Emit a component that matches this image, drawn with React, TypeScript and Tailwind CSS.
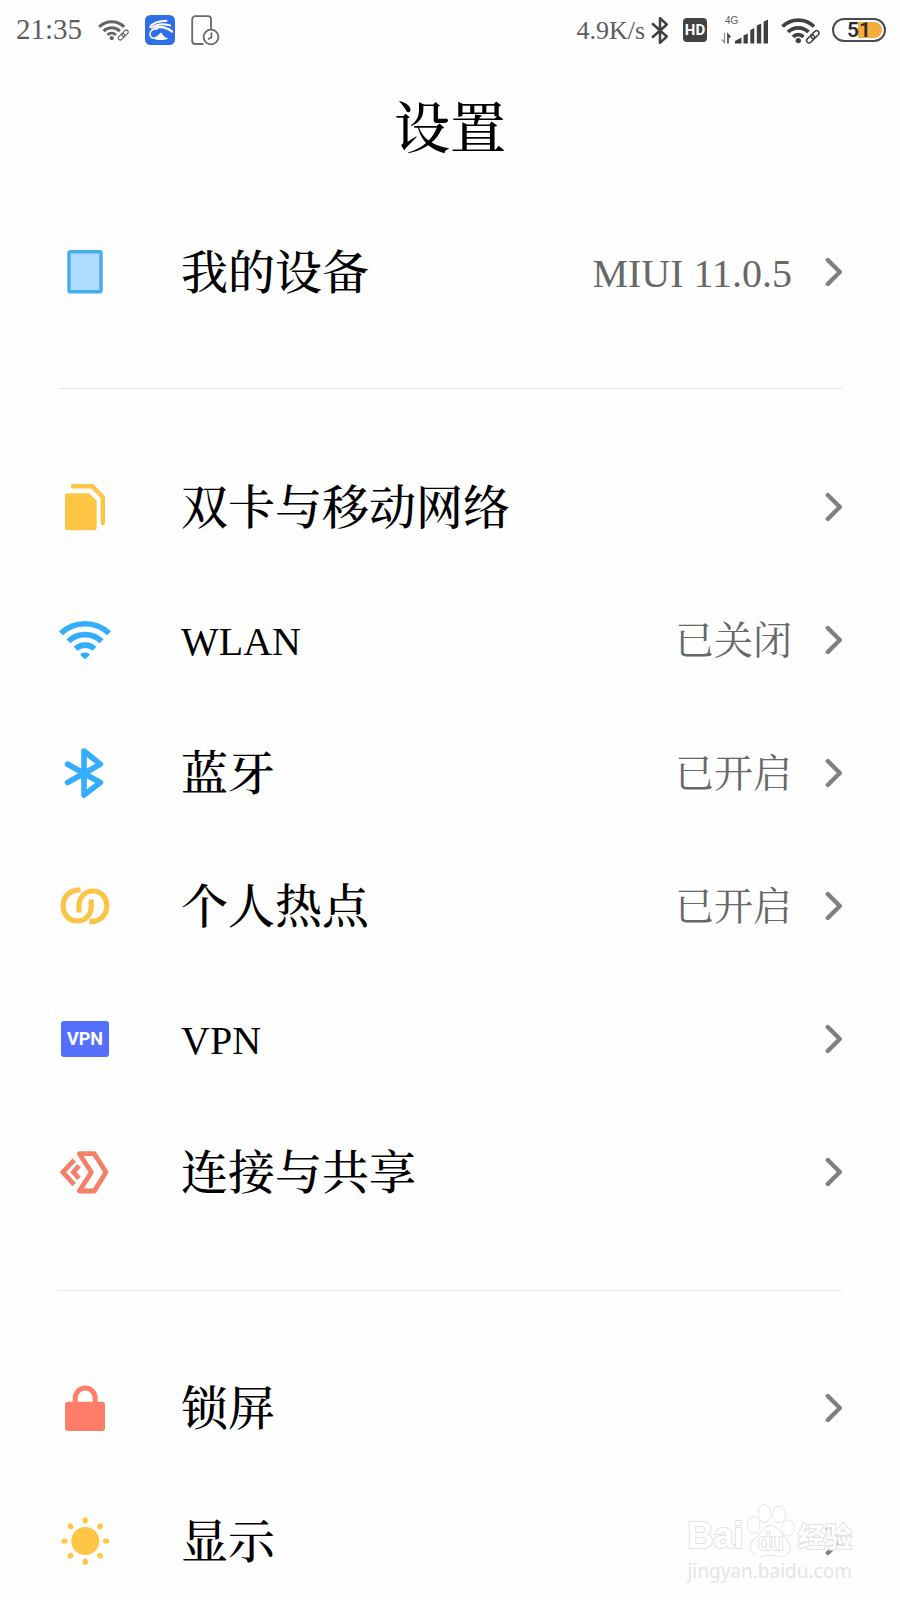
import type { ReactNode } from "react";

const serif = "font-['Liberation_Serif','Noto_Serif_CJK_SC','Noto_Sans_CJK_SC',serif]";

function Icon({ children }: { children: ReactNode }) {
  return (
    <svg viewBox="0 0 54 54" className="size-[54px]" fill="none" aria-hidden="true">
      {children}
    </svg>
  );
}

const DeviceIcon = (
  <Icon>
    <rect x="11" y="6.7" width="32" height="40" rx="1.5" fill="#aedcfd" stroke="#46ade8" strokeWidth="3.4" />
  </Icon>
);

const SimIcon = (
  <Icon>
    <path d="M9.5 13.3H31l7.7 7.5V48a2.3 2.3 0 0 1-2.3 2.3H9.5A2.5 2.5 0 0 1 7 47.8v-32a2.5 2.5 0 0 1 2.5-2.5Z" fill="#fec644" />
    <path d="M15 6.2H34.3L44.8 17V43" stroke="#fec644" strokeWidth="4.4" strokeLinecap="round" strokeLinejoin="round" />
  </Icon>
);

const WlanIcon = (
  <Icon>
    <g stroke="#34adfa" strokeWidth="5.6">
      <path d="M2.9 20.2A35.3 35.3 0 0 1 51.1 20.2" />
      <path d="M10.4 28.2A24.3 24.3 0 0 1 43.6 28.2" />
      <path d="M17.5 35.8A14 14 0 0 1 36.5 35.8" />
    </g>
    <path d="M27 44.5L24 41.7Q27 40.2 30 41.7Z" fill="#34adfa" stroke="#34adfa" strokeWidth="3" strokeLinejoin="round" />
  </Icon>
);

const BluetoothIcon = (
  <Icon>
    <path
      d="M9.6 18.2L42.3 36.5L26 49V5L42.3 18.2L9.6 36.5"
      stroke="#34adfe"
      strokeWidth="5.6"
      strokeLinecap="round"
      strokeLinejoin="round"
    />
  </Icon>
);

const HotspotIcon = (
  <Icon>
    <g stroke="#fcc446" strokeWidth="5.2">
      <path d="M22.5 11C11 10.5 5.2 18.5 5.2 27C5.2 36 11.5 42 19.5 42C27.5 42 33 36 33.2 28V20.5" />
      <path d="M21 33.5V26C21.3 18 27.5 12 35 12C42.5 12 48.8 18 48.8 27C48.8 36 42 43 31.5 42.6" />
    </g>
  </Icon>
);

const VpnIcon = (
  <span
    aria-hidden="true"
    className="flex h-9 w-12 items-center justify-center rounded-[3px] bg-[#556ffd] font-[Roboto,sans-serif] text-[18px] font-bold text-white"
  >
    VPN
  </span>
);

const ShareIcon = (
  <Icon>
    <g stroke="#f67f68" strokeWidth="4.8" strokeLinejoin="round">
      <path d="M21.3 8.7H36.3L48 27.3L36.3 46H21.3L33.4 27.3Z" />
      <path d="M16.2 15L4.9 27.3L16.2 39.7" strokeLinejoin="miter" />
      <path d="M21 20.8L15.4 27.3L21 33.4" strokeLinejoin="miter" />
    </g>
  </Icon>
);

const LockIcon = (
  <Icon>
    <rect x="7" y="20.7" width="40" height="29.4" rx="3" fill="#fe7e69" />
    <path d="M17.2 22V17a10 10 0 0 1 20 0v5" stroke="#fe7e69" strokeWidth="5" />
  </Icon>
);

const SunIcon = (
  <Icon>
    <circle cx="27.3" cy="27" r="14" fill="#fec644" />
    <g stroke="#fec644" strokeWidth="5.2" strokeLinecap="round">
      <path d="M27.3 5.8v1M27.3 47.2v1M6 27h1M47.6 27h1M12.2 12l.6.6M41.8 41.4l.6.6M42.4 12l-.6.6M12.8 41.4l-.6.6" />
    </g>
  </Icon>
);

function Chevron() {
  return (
    <svg viewBox="0 0 18 30" className="h-[30px] w-[18px]" fill="none" aria-hidden="true">
      <path d="M3.8 3L15.8 15L3.8 27" stroke="#808080" strokeWidth="4.4" strokeLinecap="round" strokeLinejoin="round" />
    </svg>
  );
}

type Item = { label: string; icon: ReactNode; value?: string };

const groups: Item[][] = [
  [{ label: "我的设备", icon: DeviceIcon, value: "MIUI 11.0.5" }],
  [
    { label: "双卡与移动网络", icon: SimIcon },
    { label: "WLAN", icon: WlanIcon, value: "已关闭" },
    { label: "蓝牙", icon: BluetoothIcon, value: "已开启" },
    { label: "个人热点", icon: HotspotIcon, value: "已开启" },
    { label: "VPN", icon: VpnIcon },
    { label: "连接与共享", icon: ShareIcon },
  ],
  [
    { label: "锁屏", icon: LockIcon },
    { label: "显示", icon: SunIcon },
  ],
];

const isLatin = (text: string) => /^[\x20-\x7e]+$/.test(text);

function Row({ label, icon, value }: Item) {
  return (
    <li>
      <button type="button" className="flex h-[133px] w-full items-center text-left">
        <span className="flex w-[54px] shrink-0 justify-center">{icon}</span>
        <span className={`ml-[69px] flex-1 pt-1 text-black ${isLatin(label) ? "text-[40px]" : "text-[47px] font-medium"}`}>
          {label}
        </span>
        {value && (
          <span className={`pt-1 text-[#686868] ${isLatin(value) ? "text-[40px]" : "text-[39px]"}`}>{value}</span>
        )}
        <span className="ml-8">
          <Chevron />
        </span>
      </button>
    </li>
  );
}

function LinkedWifi({ className, color }: { className: string; color: string }) {
  return (
    <svg viewBox="0 0 39 27" className={className} fill="none" aria-hidden="true">
      <g stroke={color} strokeWidth="3.8">
        <path d="M1.5 9.5A22.5 22.5 0 0 1 33 9.5" />
        <path d="M7 15A14.6 14.6 0 0 1 27.5 15" />
        <path d="M12 19.8A7.6 7.6 0 0 1 22.5 19.8" />
      </g>
      <circle cx="17.3" cy="23.6" r="2.7" fill={color} />
      <path d="M27 24L36 15.5" stroke="white" strokeWidth="5" />
      <g stroke={color} strokeWidth="1.5">
        <rect x="-4.6" y="-2.4" width="9.2" height="4.8" rx="2.4" transform="translate(29.6 22) rotate(-45)" />
        <rect x="-4.6" y="-2.4" width="9.2" height="4.8" rx="2.4" transform="translate(34 17.6) rotate(-45)" />
      </g>
    </svg>
  );
}

function StatusBar() {
  return (
    <header className="flex h-[60px] shrink-0 items-center justify-between pr-[14px] pl-4 text-[#5c5c5c]">
      <div className="flex items-center gap-4">
        <time className="text-[29px]">21:35</time>
        <LinkedWifi className="h-[22px] w-[31px]" color="#646464" />
        <svg viewBox="0 0 30 30" className="size-[30px]" aria-hidden="true">
          <rect width="30" height="30" rx="5.5" fill="#2f6ee6" />
          <g fill="none" stroke="white" strokeLinecap="round">
            <path d="M5 12C8.5 7 14 6 21.5 5.8" strokeWidth="1.9" />
            <path d="M7 13C12 8.4 18 8.3 25 10.4" strokeWidth="2" />
            <path d="M10.5 13.2C15.5 10.8 21 12.3 27 16.4" strokeWidth="2.4" />
            <path d="M12 14C5 13.4 2.8 20 7.5 23.2" strokeWidth="1.5" />
          </g>
          <path d="M7 22.5C12 23 13.5 19.5 16 17.6C18 19.5 18.5 22.5 23.5 23.5C19 25.5 11 26 7 22.5Z" fill="white" />
        </svg>
        <svg viewBox="0 0 29 31" className="h-[31px] w-[29px]" fill="none" stroke="#6a6a6a" aria-hidden="true">
          <path d="M12.5 29H4.2A3 3 0 0 1 1.2 26V4.2A3 3 0 0 1 4.2 1.2H17a3 3 0 0 1 3 3V14" strokeWidth="1.8" />
          <circle cx="20" cy="22" r="7.4" strokeWidth="1.8" />
          <path d="M20.4 17.5V22.5L17 24.2" strokeWidth="1.8" />
        </svg>
      </div>
      <div className="flex items-center">
        <span className="text-[26px]">4.9K/s</span>
        <svg viewBox="0 0 18 29" className="ml-1.5 h-[29px] w-[18px]" fill="none" aria-hidden="true">
          <path d="M1.8 8L15.8 20.5L9 26.8V2.2L15.8 8.5L1.8 21" stroke="#404040" strokeWidth="2.5" strokeLinejoin="round" strokeLinecap="round" />
        </svg>
        <span className="ml-3.5 flex size-6 items-center justify-center rounded-[4px] bg-[#424242] font-[Roboto,sans-serif] text-[15px] font-bold text-white">
          HD
        </span>
        <div className="relative ml-3.5 h-7 w-12">
          <span className="absolute top-0 left-1 font-['Liberation_Sans',sans-serif] text-[10px] leading-[10px]">4G</span>
          <svg viewBox="0 0 48 28" className="h-7 w-12" aria-hidden="true">
            <path d="M14 27.5V25L20.5 21.5V27.5ZM22.5 27.5V19.5L26.8 17.5V27.5ZM29.3 27.5V14L33.3 12V27.5ZM35.8 27.5V9.5L40.2 7.5V27.5ZM42.6 27.5V5.8L47 3.6V27.5Z" fill="#3e3e3e" />
            <path d="M3.5 17V26.5L.8 23.5" fill="none" stroke="#8a8a8a" strokeWidth="1.2" />
            <path d="M7 27.5V18.5L9.4 21.4" fill="none" stroke="#444" strokeWidth="1.7" />
          </svg>
        </div>
        <LinkedWifi className="ml-3 h-[27px] w-[39px]" color="#404040" />
        <span className="ml-3 flex h-6 w-[54px] items-center rounded-full border-2 border-[#4a4a50] p-[2px]">
          <span className="flex h-full w-full items-center justify-center rounded-full bg-linear-to-r from-white from-48% to-[#f6ac3a] to-48% font-[Roboto,sans-serif] text-[21px] leading-none font-semibold text-[#2c2c2c]">
            51
          </span>
        </span>
      </div>
    </header>
  );
}

function Watermark() {
  return (
    <div className="pointer-events-none absolute right-12 bottom-4 text-white">
      <div className="flex items-end justify-between [paint-order:stroke_fill] [-webkit-text-stroke:2px_#e2e2e2]">
        <span className="mb-1 font-['Liberation_Sans',sans-serif] text-[36px] leading-9 font-bold">Bai</span>
        <span className="relative">
          <svg viewBox="0 0 50 54" className="h-[54px] w-[50px]" fill="white" stroke="#dcdcdc" strokeWidth="1.3" aria-hidden="true">
            <ellipse cx="7.5" cy="21" rx="6" ry="8" />
            <ellipse cx="18.5" cy="9.5" rx="6" ry="8.5" />
            <ellipse cx="33" cy="10.5" rx="6.2" ry="8" />
            <ellipse cx="42" cy="24" rx="6" ry="7.8" />
            <path d="M24.5 22C32 22 34 29 39 34C45 39 46 46 41 50C36 54 30 51 24.5 51C18 51 13 54 8 50C3 46 4 39 9.5 34.5C15 30 17 22 24.5 22Z" />
          </svg>
          <span className="absolute inset-x-0 bottom-1 text-center font-['Liberation_Sans',sans-serif] text-[23px] leading-6">du</span>
        </span>
        <span className="mb-1 font-['Noto_Sans_CJK_SC',sans-serif] text-[27px] leading-9 font-bold">经验</span>
      </div>
      <div className="text-center font-['Noto_Sans',sans-serif] text-[19px] leading-[26px] text-[#e4e4e4]">jingyan.baidu.com</div>
    </div>
  );
}

export default function App() {
  return (
    <div className={`relative flex h-screen flex-col overflow-hidden bg-[#fefefe] ${serif}`}>
      <StatusBar />
      <main className="min-h-0 flex-1 overflow-y-auto [scrollbar-width:none]">
        <h1 className="flex h-[145px] items-center justify-center pb-2 text-[56px] leading-none font-medium text-black">
          设置
        </h1>
        <div className="px-[58px]">
          {groups.map((group, index) => (
            <ul
              key={group[0].label}
              className={index === 0 ? "pb-[50px]" : index === 1 ? "border-y border-[#e6e6e6] pt-[51px] pb-[52px]" : "pt-[50px]"}
            >
              {group.map((item) => (
                <Row key={item.label} {...item} />
              ))}
            </ul>
          ))}
        </div>
      </main>
      <Watermark />
    </div>
  );
}
